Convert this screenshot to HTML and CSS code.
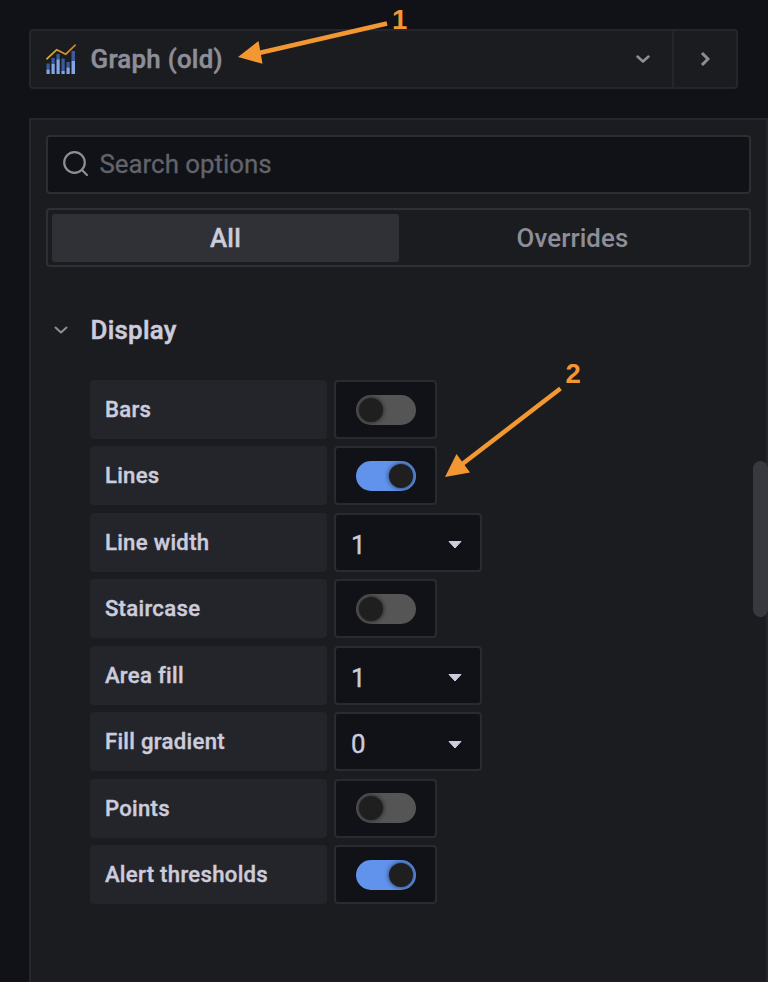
FILE: index.html
```html
<!DOCTYPE html>
<html lang="en">
<head>
<meta charset="utf-8">
<title>Panel options</title>
<link rel="stylesheet" href="styles.css">
</head>
<body>
<header class="viz-picker">
  <div class="viz-current">
    <svg class="viz-icon" width="30" height="30" viewBox="0 0 30 30">
      <defs><linearGradient id="trend"><stop offset="0" stop-color="#d5af2f"/><stop offset="1" stop-color="#cf8237"/></linearGradient></defs>
      <path fill="#3a5c9f" d="M.5 19.500h3.200v6H.5zM5.500 14h3.200v6H5.500zM10.500 10h3.200v6h-3.200zM15.500 14.500h3.200V27h-3.200zM20.500 18h3.200v5.500h-3.200zM25.500 7H29v10h-3.500z"/>
      <path fill="#82a6e6" d="M.5 25.500h3.200V30H.5zM5.500 20h3.200v10H5.500zM10.500 15.500h3.200V30h-3.200zM15.500 27h3.200v3h-3.200zM20.500 23.500h3.200V30h-3.200zM25.500 17H29v13h-3.500z"/>
      <path fill="none" stroke="url(#trend)" stroke-width="1.6" d="M.4 15.300 10.600 5.800l9.200 4.400L29.700.700"/>
    </svg>
    <span class="viz-name">Graph (old)</span>
    <svg class="chevron" width="14" height="9" viewBox="0 0 14 9"><path d="m1.500 1.500 5.500 5 5.500-5"/></svg>
  </div>
  <div class="viz-toggle">
    <svg class="chevron" width="10" height="16" viewBox="0 0 10 16"><path d="m2 2 6 6-6 6"/></svg>
  </div>
</header>

<main class="options-pane">
  <div class="search">
    <svg width="26" height="26" viewBox="0 0 26 26"><circle cx="11.500" cy="11.500" r="10.300"/><path d="m19 19 5 5"/></svg>
    <span>Search options</span>
  </div>
  <div class="tabs">
    <div class="tab active">All</div>
    <div class="tab">Overrides</div>
  </div>
  <h2 class="section-title">
    <svg class="chevron" width="14" height="9" viewBox="0 0 14 9"><path d="m1.500 1.500 5.500 5 5.500-5"/></svg>
    <span>Display</span>
  </h2>
  <div class="fields">
    <div class="field"><div class="label">Bars</div><div class="control"><i class="switch"></i></div></div>
    <div class="field"><div class="label">Lines</div><div class="control"><i class="switch on"></i></div></div>
    <div class="field"><div class="label">Line width</div><div class="control select"><span>1</span><svg width="14" height="9" viewBox="0 0 14 9"><path d="M1 1.500h12L7 8z"/></svg></div></div>
    <div class="field"><div class="label">Staircase</div><div class="control"><i class="switch"></i></div></div>
    <div class="field"><div class="label">Area fill</div><div class="control select"><span>1</span><svg width="14" height="9" viewBox="0 0 14 9"><path d="M1 1.500h12L7 8z"/></svg></div></div>
    <div class="field"><div class="label">Fill gradient</div><div class="control select"><span>0</span><svg width="14" height="9" viewBox="0 0 14 9"><path d="M1 1.500h12L7 8z"/></svg></div></div>
    <div class="field"><div class="label">Points</div><div class="control"><i class="switch"></i></div></div>
    <div class="field"><div class="label">Alert thresholds</div><div class="control"><i class="switch on"></i></div></div>
  </div>
  <div class="scroll-thumb"></div>
</main>

<svg class="callouts" width="768" height="982" viewBox="0 0 768 982">
  <path class="shaft" d="M387 23.500 259 53M560.500 388.500 461 465"/>
  <path d="M238 57l20.500-16 4 22.800zM445 477l11.500-23 13.500 18.500z"/>
  <text x="392" y="29">1</text>
  <text x="565.500" y="383">2</text>
</svg>
</body>
</html>
```
FILE: styles.css
```css
* { box-sizing: border-box; }

body {
  margin: 0;
  height: 982px;
  padding: 29px 0 0 29px;
  overflow: hidden;
  display: flex;
  flex-direction: column;
  gap: 29px;
  background: #111217;
  color: #ccccdc;
  font-family: Roboto, "Liberation Sans", sans-serif;
}

svg { display: block; flex: none; }

.chevron {
  fill: none;
  stroke: #8e8e99;
  stroke-width: 2.5;
  stroke-linecap: round;
  stroke-linejoin: round;
}

.viz-picker {
  display: flex;
  flex: none;
  width: 709px;
  height: 60px;
  border: 2px solid #25262b;
  border-radius: 4px;
  background: #1b1c20;
}

.viz-current {
  display: flex;
  align-items: center;
  flex: 1;
  padding: 0 22px 0 15px;
}

.viz-name {
  flex: 1;
  margin-left: 14.5px;
  color: #8e8e99;
  font-size: 25.85px;
  font-weight: 500;
  letter-spacing: 0.28px;
  -webkit-text-stroke: 0.5px;
}

.viz-toggle {
  display: flex;
  align-items: center;
  justify-content: center;
  width: 64px;
  border-left: 2px solid #25262b;
}

.viz-toggle .chevron { stroke-width: 3; stroke-linecap: butt; stroke-linejoin: miter; }

.options-pane {
  position: relative;
  flex: 1;
  padding: 15px 16px 0;
  border: solid #25262b;
  border-width: 2px 2px 0;
  background: #1b1c20;
}

.search {
  display: flex;
  align-items: center;
  gap: 10.5px;
  width: 705px;
  height: 59px;
  margin-left: -1px;
  padding: 0 0 1px 15px;
  border: 2px solid #2d2e34;
  border-radius: 4px;
  background: #111217;
  color: #62636b;
  font-size: 25.85px;
  -webkit-text-stroke: 0.3px;
}

.search svg {
  fill: none;
  stroke: #8e8e99;
  stroke-width: 2.2;
  stroke-linecap: round;
}

.tabs {
  display: flex;
  width: 705px;
  height: 59px;
  margin: 14px 0 0 -1px;
  padding: 4px 3px 3px 4px;
  border: 2px solid #2f3035;
  border-radius: 4px;
}

.tab {
  display: flex;
  align-items: center;
  justify-content: center;
  flex: 1;
  border-radius: 3px;
  color: #8e8e99;
  font-size: 25.85px;
  font-weight: 500;
  letter-spacing: 0.1px;
}

.tab.active {
  background: #303136;
  color: #ccccdc;
  letter-spacing: 0.28px;
  -webkit-text-stroke: 0.4px;
}

.section-title {
  display: flex;
  align-items: center;
  gap: 22.5px;
  height: 40px;
  margin: 43px 0 30px 7px;
  font-size: 25.85px;
  font-weight: 500;
  letter-spacing: 0.28px;
  -webkit-text-stroke: 0.5px;
}

.section-title .chevron { stroke-width: 2; }

.fields {
  display: grid;
  gap: 7.46px;
  margin-left: 43.4px;
}

.field { display: flex; gap: 7.5px; height: 59px; }

.label {
  width: 236.5px;
  padding: 15px 14.5px 0;
  border-radius: 4px;
  background: #24252a;
  font-size: 22.15px;
  font-weight: 500;
  line-height: 29px;
  letter-spacing: 0.3px;
  -webkit-text-stroke: 0.4px;
}

.control {
  display: flex;
  align-items: center;
  justify-content: center;
  width: 103px;
  border: 2px solid #2a2b31;
  border-radius: 4px;
  background: #111217;
}

.select {
  justify-content: space-between;
  width: 147.5px;
  padding: 5px 18px 0 14.5px;
  font-size: 25.85px;
  -webkit-text-stroke: 0.4px;
}

.select svg {
  fill: #ccccdc;
  stroke: #ccccdc;
  stroke-linejoin: round;
}

.switch {
  display: flex;
  align-items: center;
  width: 60px;
  height: 30px;
  padding: 0 3px;
  border-radius: 15px;
  background: #555;
  overflow: hidden;
}

.switch::before {
  content: "";
  width: 24px;
  height: 24px;
  border-radius: 50%;
  background: #1f1f20;
  box-shadow: 0 0 5px rgba(0, 0, 0, 0.7);
}

.switch.on { justify-content: flex-end; background: #6193ec; }

.scroll-thumb {
  position: absolute;
  top: 341px;
  right: -2px;
  width: 15px;
  height: 156px;
  border-radius: 8px;
  background: #38393e;
}

.callouts {
  position: absolute;
  top: 0;
  left: 0;
  fill: #f39733;
  font: bold 27.5px "Liberation Sans", sans-serif;
}

.callouts .shaft { stroke: #f39733; stroke-width: 4.5; }
```
